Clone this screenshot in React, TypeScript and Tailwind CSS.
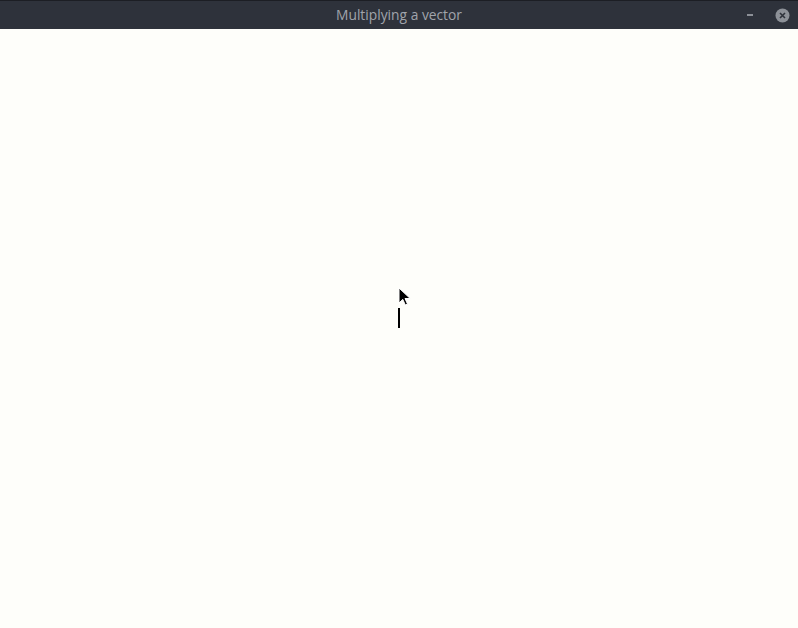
import React from 'react';

const TitleBar: React.FC<{ title: string }> = ({ title }) => (
  <div className="relative flex h-[29px] items-center justify-center border-t border-[#1c1e24] bg-[#2e323b]">
    <span className="text-[13.8px] leading-none text-[#a0a4ab]" style={{ fontFamily: '"Open Sans", "Noto Sans", sans-serif' }}>
      {title}
    </span>
    <div className="absolute right-[8px] top-0 flex h-full items-center gap-[22px]">
      {/* minimize */}
      <div className="h-[2px] w-[6px] bg-[#8c9097]" />
      {/* close */}
      <svg width="15" height="15" viewBox="0 0 15 15">
        <circle cx="7.5" cy="7.5" r="7" fill="#8d9198" />
        <path d="M5 5 L10 10 M10 5 L5 10" stroke="#2e323b" strokeWidth="1.6" />
      </svg>
    </div>
  </div>
);

export default function App() {
  return (
    <div className="flex h-[628px] w-[798px] flex-col bg-[#fefefa]">
      <TitleBar title="Multiplying a vector" />
      <div className="flex flex-1 flex-col items-center pt-[258px]">
        {/* mouse pointer */}
        <svg width="14" height="20" viewBox="0 0 14 20" className="ml-[12px]">
          <path d="M1 1 L1 16 L4.8 12.4 L7.3 18 L9.5 17 L7 11.5 L12.2 11.5 Z" fill="#000" stroke="#fff" strokeWidth="1" />
        </svg>
        {/* text caret */}
        <div className="mt-[1px] h-[20px] w-[2px] bg-black" />
      </div>
    </div>
  );
}
